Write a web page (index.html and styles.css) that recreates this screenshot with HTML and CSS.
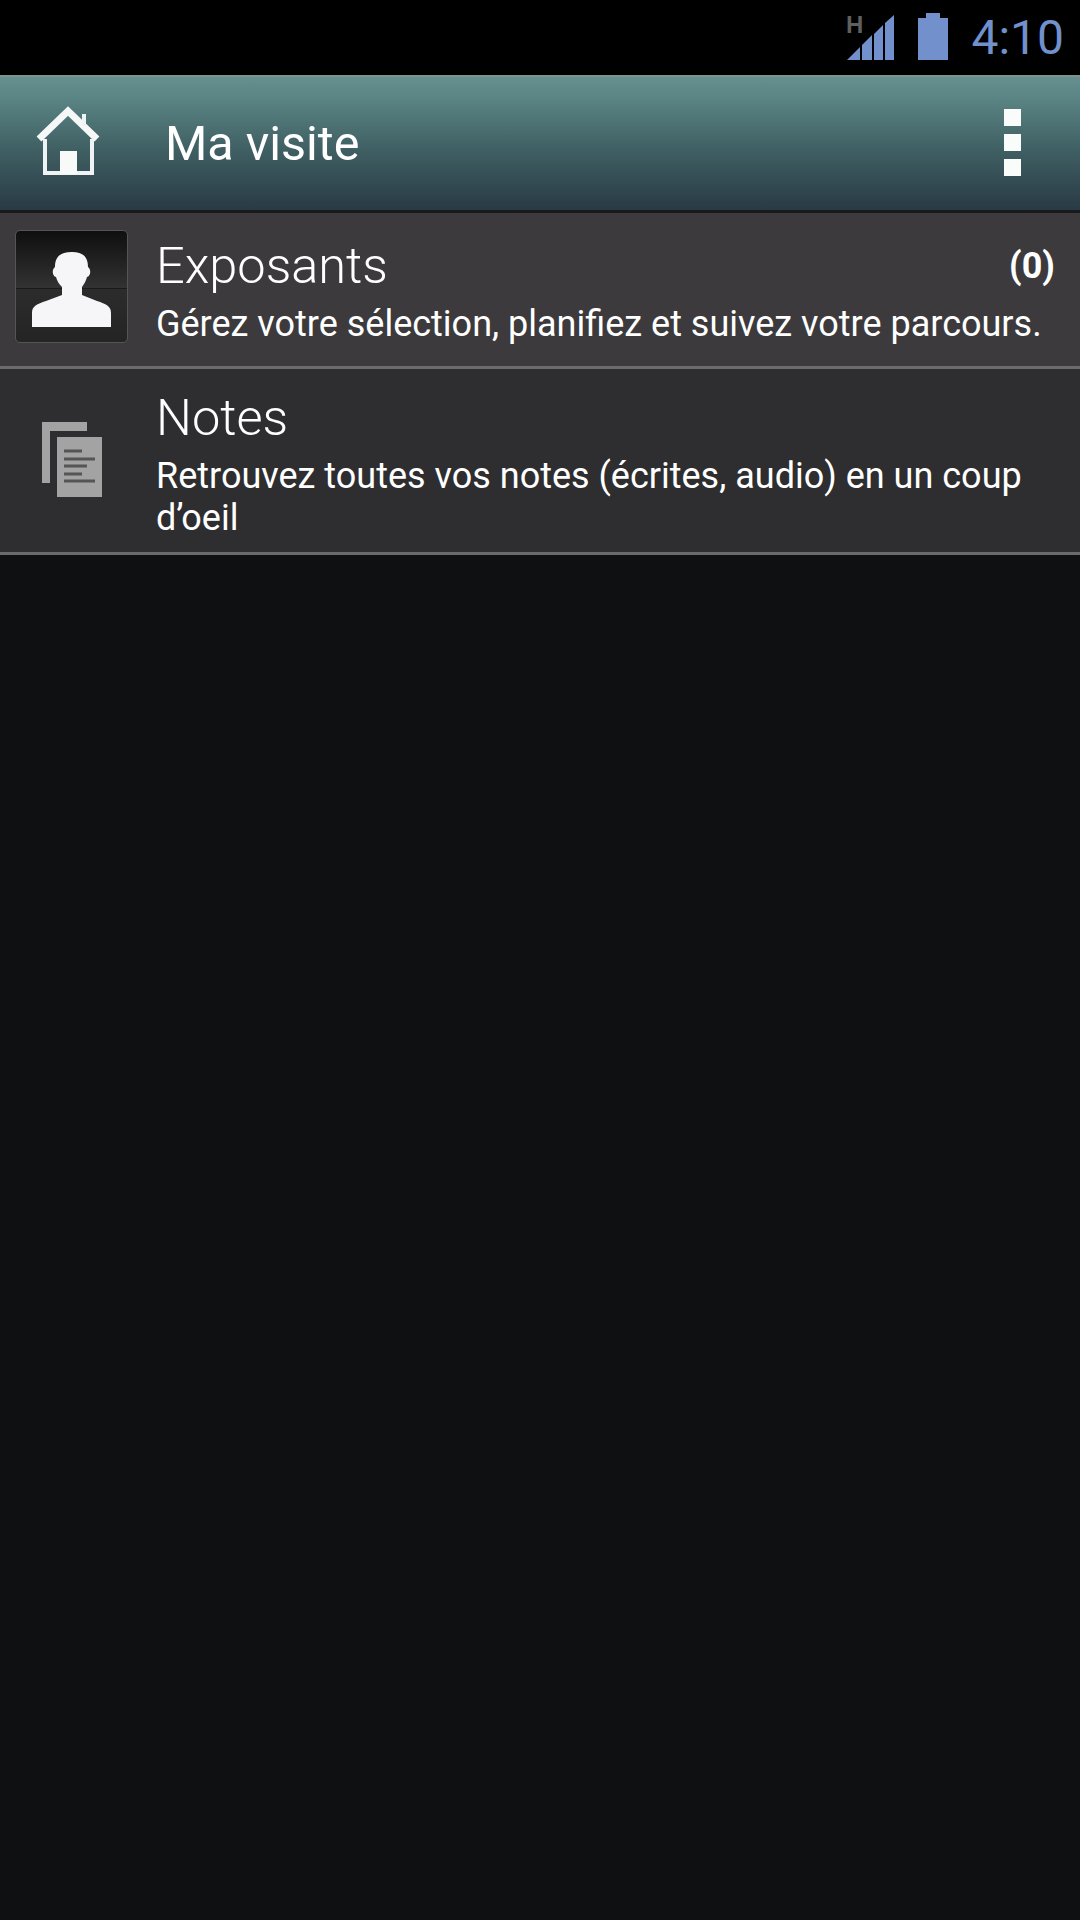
FILE: index.html
```html
<!DOCTYPE html>
<html lang="fr">
<head>
<meta charset="utf-8">
<title>Ma visite</title>
<link rel="stylesheet" href="styles.css">
</head>
<body>
<div class="screen">
  <div class="status">
    <svg class="sig" width="50" height="53" viewBox="0 0 50 53">
      <text x="0" y="25" class="h">H</text>
      <path class="blue" d="M1 52 L14 39 V52 Z M16 52 V37 L26 27 V52 Z M28 52 V26 L37 17 V52 Z M39 52 V15 L48 7 V52 Z"/>
    </svg>
    <svg class="bat" width="30" height="48" viewBox="0 0 30 48">
      <path class="blue" d="M8 0 H22 V5 H30 V47 H0 V5 H8 Z"/>
    </svg>
    <span class="clock">4:10</span>
  </div>
  <header class="bar">
    <svg class="home" width="66" height="72" viewBox="0 0 66 72">
      <path class="home-roof" d="M4 33 L33 5 L62 33"/>
      <path class="home-line" d="M10 33 V67 H57 V33 M49 20 V8"/>
      <rect class="white" x="25" y="45" width="17" height="23"/>
    </svg>
    <h1 class="title">Ma visite</h1>
    <div class="more"><i></i><i></i><i></i></div>
  </header>
  <section class="row row-a">
    <div class="thumb">
      <svg width="111" height="111" viewBox="0 0 111 111">
        <path class="white-soft" d="M16 96 V82 C16 75 21 73 30 70 L46 64 V56 C43 53 41 50 40 46 C37 46 35 39 39 36 C39 26 44 21 56 21 C67 21 72 26 72 36 C76 39 74 46 71 46 C70 50 68 53 66 56 V64 L81 70 C90 73 95 75 95 82 V96 Z"/>
      </svg>
    </div>
    <div class="copy">
      <div class="head"><h2>Exposants</h2><b>(0)</b></div>
      <p>Gérez votre sélection, planifiez et suivez votre parcours.</p>
    </div>
  </section>
  <section class="row row-b">
    <div class="doc">
      <svg width="60" height="75" viewBox="0 0 60 75">
        <path class="grey" d="M0 0 H45 V9 H8 V61 H0 Z"/>
        <rect class="grey" x="15" y="15" width="45" height="60"/>
        <path class="ink" d="M22 29 H40 M22 37 H53 M22 44 H45 M22 52 H40 M22 59 H53"/>
      </svg>
    </div>
    <div class="copy">
      <div class="head"><h2>Notes</h2></div>
      <p>Retrouvez toutes vos notes (écrites, audio) en un coup d’oeil</p>
    </div>
  </section>
</div>
</body>
</html>
```
FILE: styles.css
```css
* { box-sizing: border-box; margin: 0; padding: 0; }
html, body { width: 1080px; height: 1920px; background: #0f1012; overflow: hidden; }
body { font-family: Roboto, "Noto Sans", sans-serif; color: #fff; }
.screen { display: flex; flex-direction: column; height: 1920px; }

.status { height: 75px; background: #000; display: flex; align-items: flex-start; justify-content: flex-end; padding: 8px 16px 0 0; }
.sig { margin-right: 22px; }
.bat { margin-top: 5px; margin-right: 23px; }
.blue { fill: #7190cc; }
.h { font: 700 24px "Liberation Sans", sans-serif; fill: #5f5f5f; }
.clock { font-size: 48px; line-height: 48px; margin-top: 6px; color: #7190cc; font-weight: 400; }

.bar { height: 138px; display: flex; align-items: center; background: linear-gradient(#66908f 0%, #5b8585 15%, #3f5f63 55%, #293a44 100%); border-top: 2px solid #7c9391; border-bottom: 3px solid #181a1e; }
.home { margin-left: 35px; margin-bottom: 3px; filter: blur(0.5px); }
.home-roof { fill: none; stroke: #f6f8f8; stroke-width: 7; }
.home-line { fill: none; stroke: #f0f3f3; stroke-width: 4; }
.white { fill: #f8fafa; }
.title { font-size: 48.5px; font-weight: 400; margin-left: 64px; flex: 1; }
.more { display: flex; flex-direction: column; gap: 8px; margin-right: 59px; margin-bottom: 2px; }
.more i { display: block; width: 17px; height: 17px; background: #fafcfc; }

.row { display: flex; align-items: flex-start; border-bottom: 3px solid #6b6b6d; }
.row-a { height: 156px; background: #3c3a3d; }
.row-b { height: 186px; background: #2e2d2f; }
.thumb { width: 113px; height: 113px; margin: 17px 0 0 15px; border: 1px solid #555; border-radius: 5px; background: linear-gradient(#0f0f0f 0%, #323232 51%, #1a1a1a 51%, #1a1a1a 52%, #2c2c2c 52%, #242424 100%); flex: none; overflow: hidden; }
.thumb svg { display: block; }
.white-soft { fill: #f6f6f8; }
.doc { width: 60px; height: 75px; margin: 53px 0 0 42px; flex: none; }
.doc svg { display: block; }
.grey { fill: #a3a3a3; }
.ink { stroke: #555; stroke-width: 3; fill: none; }
.row-a .copy { margin-left: 28px; }
.row-b .copy { margin-left: 54px; }
.copy { flex: 1; padding-right: 25px; }
.head { display: flex; justify-content: space-between; align-items: center; }
.head h2 { font-size: 50.5px; font-weight: 300; line-height: 60px; }
.head b { font-size: 36px; font-weight: 700; }
.row-a .head { padding-top: 23px; }
.row-b .head { padding-top: 19px; }
.copy p { font-size: 36px; line-height: 42px; margin-top: 7px; }
```
